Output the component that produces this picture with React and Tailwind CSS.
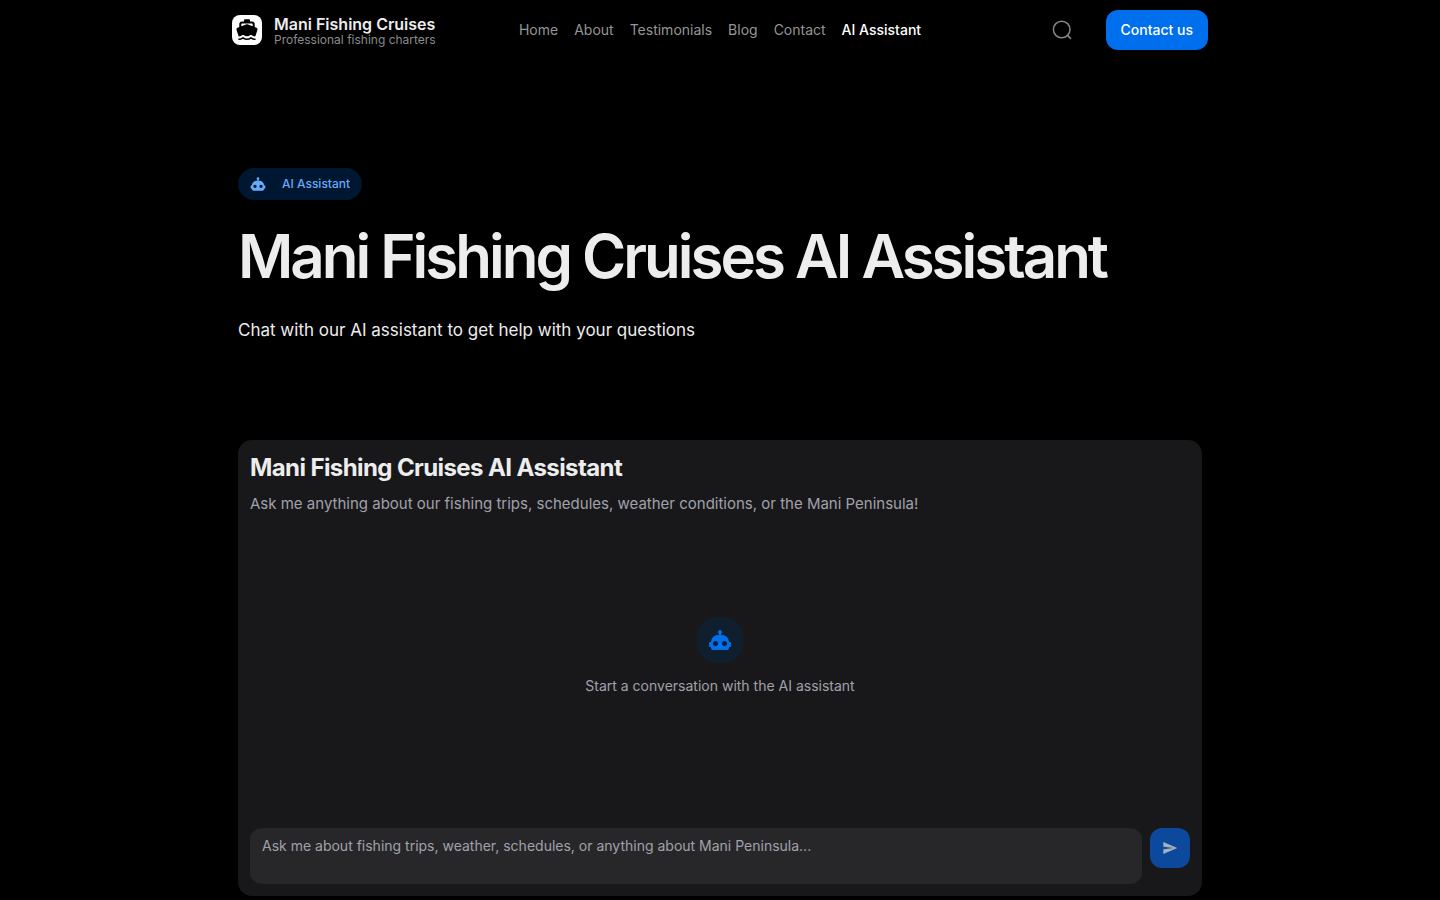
import { MdSend } from "react-icons/md";

const links = ["Home", "About", "Testimonials", "Blog", "Contact"];

function BoatIcon() {
  return (
    <svg viewBox="0 0 24 24" fill="currentColor" className="size-6" aria-hidden="true">
      <path d="M10.2 1.2h3.6c.7 0 1.2.5 1.2 1.2v1h2.2c1.4 0 2.5 1.1 2.5 2.5v3.2l1.8.7c.8.3 1.2 1.1 1 1.9l-2.1 6.6c-1.2.3-2.6-.2-3.9-1.2-.4-.3-.8-.3-1.2 0-2 1.6-4.6 1.6-6.6 0-.4-.3-.8-.3-1.2 0-1.3 1-2.7 1.5-3.9 1.2l-2.1-6.6c-.2-.8.2-1.6 1-1.9l1.8-.7V5.900c0-1.400 1.100-2.500 2.500-2.500H9v-1c0-.7.500-1.200 1.200-1.200ZM6.300 6.200v2l4.700-1.700c.7-.25 1.300-.25 2 0l4.700 1.700v-2c0-.5-.3-.8-.8-.8H7.100c-.5 0-.8.3-.8.8Z" />
      <path d="M4 21.200c1.400 0 2.800-.5 4-1.400 2.400 1.800 5.600 1.800 8 0 1.200.9 2.600 1.400 4 1.400" fill="none" stroke="currentColor" strokeWidth="1.500" strokeLinecap="round" />
    </svg>
  );
}

function RobotIcon({ className }) {
  return (
    <svg viewBox="0 0 24 24" fill="currentColor" className={className} aria-hidden="true">
      <path d="M12,2A2,2 0 0,1 14,4C14,4.74 13.6,5.39 13,5.73V7H14A7,7 0 0,1 21,14H22A1,1 0 0,1 23,15V18A1,1 0 0,1 22,19H21V20A2,2 0 0,1 19,22H5A2,2 0 0,1 3,20V19H2A1,1 0 0,1 1,18V15A1,1 0 0,1 2,14H3A7,7 0 0,1 10,7H11V5.73C10.4,5.39 10,4.74 10,4A2,2 0 0,1 12,2M7.5,13A2.5,2.5 0 0,0 5,15.5A2.5,2.5 0 0,0 7.5,18A2.5,2.5 0 0,0 10,15.5A2.5,2.5 0 0,0 7.5,13M16.5,13A2.5,2.5 0 0,0 14,15.5A2.5,2.5 0 0,0 16.5,18A2.5,2.5 0 0,0 19,15.5A2.5,2.5 0 0,0 16.5,13Z" />
    </svg>
  );
}

function SearchIcon() {
  return (
    <svg viewBox="0 0 24 24" fill="none" stroke="currentColor" strokeWidth="1.5" strokeLinecap="round" strokeLinejoin="round" className="size-6" aria-hidden="true">
      <circle cx="11.7" cy="11.5" r="8.3" />
      <path d="m17.600 17.400 3 3" />
    </svg>
  );
}

function Header() {
  return (
    <header className="mx-auto flex h-15 w-full max-w-[976px] items-center">
      <div className="flex flex-1">
        <a href="#home" className="flex items-center gap-3">
          <span className="flex size-[30px] items-center justify-center rounded-lg bg-white text-black">
            <BoatIcon />
          </span>
          <span className="flex flex-col pt-1">
            <span className="text-base leading-4 font-semibold text-[#ededee]">Mani Fishing Cruises</span>
            <span className="text-xs leading-4 text-[#8b8b8d]">Professional fishing charters</span>
          </span>
        </a>
      </div>
      <nav className="flex gap-4 text-sm leading-5 text-[#959597]">
        {links.map((link) => (
          <a key={link} href={"#" + link.toLowerCase()}>{link}</a>
        ))}
        <a href="#assistant" aria-current="page" className="font-medium text-white">AI Assistant</a>
      </nav>
      <div className="flex flex-1 items-center justify-end gap-8">
        <button type="button" aria-label="Search" className="text-[#85858a]">
          <SearchIcon />
        </button>
        <a href="#contact-us" className="flex h-10 items-center rounded-xl bg-[#006fee] px-[15px] text-sm font-medium text-white">
          Contact us
        </a>
      </div>
    </header>
  );
}

function Chat() {
  return (
    <section className="flex h-114 flex-col rounded-[14px] bg-[#18181b] p-3">
      <h2 className="mt-1 text-2xl leading-6 font-bold tracking-tight text-[#ededee]">Mani Fishing Cruises AI Assistant</h2>
      <p className="mt-2 text-[15px] leading-8 text-[#a1a1aa]">
        Ask me anything about our fishing trips, schedules, weather conditions, or the Mani Peninsula!
      </p>
      <div className="flex flex-1 flex-col items-center pt-24">
        <span className="flex size-12 items-center justify-center rounded-full bg-[#0f1f2e] text-[#006fee]">
          <RobotIcon className="size-6" />
        </span>
        <p className="mt-3 text-sm leading-5 text-[#a1a1aa]">Start a conversation with the AI assistant</p>
      </div>
      <form className="flex items-start gap-2" onSubmit={(e) => e.preventDefault()}>
        <textarea
          aria-label="Message"
          placeholder="Ask me about fishing trips, weather, schedules, or anything about Mani Peninsula..."
          className="block h-14 flex-1 resize-none rounded-xl bg-[#27272a] px-3 py-2 text-sm leading-5 text-white outline-none placeholder:text-[#a1a1aa]"
        />
        <button type="submit" aria-label="Send" className="flex size-10 items-center justify-center rounded-xl bg-[#0c489b] text-[#a3b0c0]">
          <MdSend className="size-4" />
        </button>
      </form>
    </section>
  );
}

export default function App() {
  return (
    <div className="min-h-screen bg-black pb-1 font-['Inter',sans-serif]">
      <Header />
      <main className="mx-auto w-full max-w-[964px] pt-27">
        <div className="flex h-8 w-fit items-center gap-4 rounded-full bg-[#001731] px-3 text-xs text-[#66aaf9]">
          <RobotIcon className="size-4" />
          <span className="font-medium">AI Assistant</span>
        </div>
        <h1 className="mt-6 text-6xl leading-16 font-semibold tracking-tighter text-[#ededee]">
          Mani Fishing Cruises AI Assistant
        </h1>
        <p className="mt-7 mb-24 text-[17px] leading-7 text-[#ededee]">Chat with our AI assistant to get help with your questions</p>
        <Chat />
      </main>
    </div>
  );
}
